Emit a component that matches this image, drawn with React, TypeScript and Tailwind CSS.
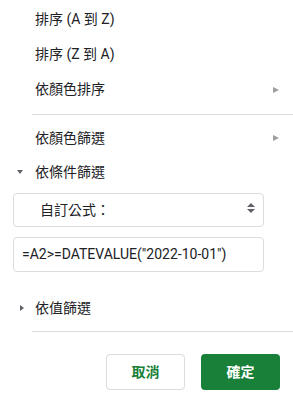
export default function App() {
  const font = { fontFamily: 'Roboto, "Noto Sans CJK TC", sans-serif' }
  return (
    <div className="w-[293px] h-[398px] bg-white text-[14px] text-[#202124] overflow-hidden" style={font}>
      <div className="pt-[2px]">
        <MenuItem label="排序 (A 到 Z)" tall />
        <MenuItem label="排序 (Z 到 A)" tall />
        <MenuItem label="依顏色排序" arrow tall />
      </div>
      <div className="ml-[32px] mt-[7px] mb-[6px] h-px bg-[#dadce0]" />
      <MenuItem label="依顏色篩選" arrow />

      <div className="h-[34px] flex items-center">
        <span className="w-[35px] flex justify-center pl-[9px] pr-[4px]">
          <span className="block w-0 h-0 border-l-[3px] border-r-[3px] border-t-[4px] border-l-transparent border-r-transparent border-t-[#5f6368]" />
        </span>
        <span>依條件篩選</span>
      </div>

      <div className="px-[13px] pt-[4px] flex flex-col gap-[10px] w-[277px]">
        <div className="h-[34px] border border-[#dadce0] rounded-[4px] flex items-center justify-between pl-[26px] pr-[8px]">
          <span>自訂公式：</span>
          <span className="flex flex-col items-center gap-[2px] -mt-[4px]">
            <span className="block w-0 h-0 border-l-[4px] border-r-[4px] border-b-[4px] border-l-transparent border-r-transparent border-b-[#5f6368]" />
            <span className="block w-0 h-0 border-l-[4px] border-r-[4px] border-t-[4px] border-l-transparent border-r-transparent border-t-[#5f6368]" />
          </span>
        </div>
        <div className="h-[35px] border border-[#dadce0] rounded-[4px] flex items-center pl-[8px]">
          <span>=A2&gt;=DATEVALUE("2022-10-01")</span>
        </div>
      </div>

      <div className="h-[34px] mt-[19px] flex items-center">
        <span className="w-[35px] flex justify-end pr-[11px]">
          <span className="block w-0 h-0 border-t-[3px] border-b-[3px] border-l-[4px] border-t-transparent border-b-transparent border-l-[#5f6368]" />
        </span>
        <span>依值篩選</span>
      </div>

      <div className="ml-[32px] mt-[6px] h-px bg-[#dadce0]" />

      <div className="flex justify-end gap-[16px] pr-[13px] pt-[22px]">
        <button className="w-[79px] h-[36px] rounded-[4px] border border-[#dadce0] bg-white text-[#188038] font-bold text-[14px]">
          取消
        </button>
        <button className="w-[79px] h-[36px] rounded-[4px] bg-[#188038] text-white font-bold text-[14px]">
          確定
        </button>
      </div>
    </div>
  )
}

function MenuItem({ label, arrow, tall }: { label: string; arrow?: boolean; tall?: boolean }) {
  return (
    <div className={`${tall ? 'h-[35px]' : 'h-[34px]'} flex items-center justify-between pl-[35px] pr-[14px]`}>
      <span>{label}</span>
      {arrow && (
        <span className="block w-0 h-0 border-t-[3px] border-b-[3px] border-l-[6px] border-t-transparent border-b-transparent border-l-[#9e9e9e]" />
      )}
    </div>
  )
}
